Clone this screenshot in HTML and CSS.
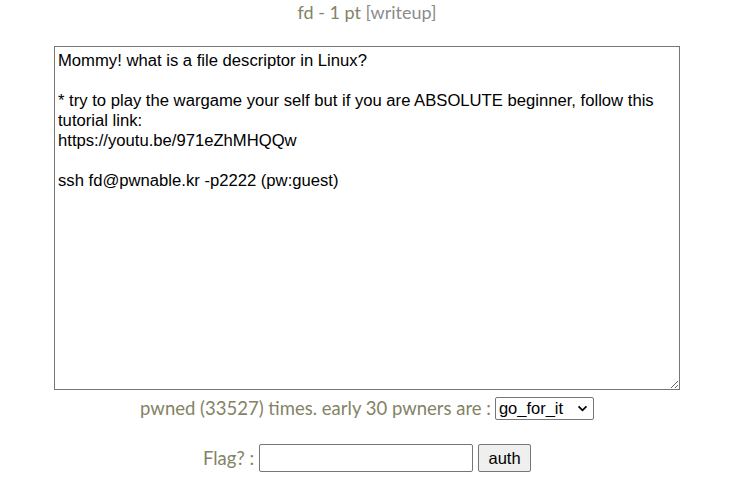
FILE: index.html
```html
<!DOCTYPE html>
<html>
<head>
<meta charset="utf-8">
<link rel="stylesheet" href="styles.css">
</head>
<body>
<div class="page">
  <div class="title"><span class="name">fd - 1 pt </span><span class="writeup">[writeup]</span></div>
  <textarea class="desc" readonly>Mommy! what is a file descriptor in Linux?

* try to play the wargame your self but if you are ABSOLUTE beginner, follow this tutorial link:
https://youtu.be/971eZhMHQQw

ssh fd@pwnable.kr -p2222 (pw:guest)
</textarea>
  <div class="row pwned">
    <span class="label">pwned (33527) times. early 30 pwners are :</span>
    <select class="sel"><option>go_for_it</option></select>
  </div>
  <div class="row flag">
    <span class="label">Flag? :</span>
    <input class="flaginput" type="text">
    <button class="auth">auth</button>
  </div>
</div>
</body>
</html>
```
FILE: styles.css
```css
html, body {
  margin: 0;
  padding: 0;
  background: #ffffff;
}
.page {
  display: flex;
  flex-direction: column;
  align-items: center;
  padding-top: 1px;
}
.title {
  font-family: Lato, "Open Sans", sans-serif;
  font-size: 18px;
  line-height: 22px;
  height: 22px;
}
.title .name { color: #838366; }
.title .writeup { color: #8c8c8c; }
.desc {
  margin-top: 23px;
  width: 626px;
  height: 344px;
  box-sizing: border-box;
  border: 1px solid #767676;
  border-radius: 0;
  padding: 4px 3px 2px 3px;
  font-family: Arial, "Liberation Sans", sans-serif;
  font-size: 16.65px;
  line-height: 20px;
  color: #000;
  resize: both;
  outline: none;
}
.row {
  display: flex;
  align-items: center;
  gap: 4px;
}
.label {
  font-family: Lato, "Open Sans", sans-serif;
  font-size: 18.5px;
  color: #838366;
}
.pwned {
  margin-top: 6px;
  height: 24px;
}
.sel {
  appearance: none;
  -webkit-appearance: none;
  height: 23px;
  width: 99px;
  box-sizing: border-box;
  font-family: Arial, "Liberation Sans", sans-serif;
  font-size: 16.5px;
  border: 1px solid #767676;
  border-radius: 2px;
  background-color: #fff;
  background-image: url("data:image/svg+xml;utf8,<svg xmlns='http://www.w3.org/2000/svg' width='12' height='8' viewBox='0 0 12 8'><path d='M1.5 1.5 L6 6 L10.5 1.5' fill='none' stroke='black' stroke-width='2'/></svg>");
  background-repeat: no-repeat;
  background-position: right 5px center;
  background-size: 11px 7px;
  color: #000;
  padding: 0 20px 0 3px;
}
.flag {
  margin-top: 24px;
  gap: 5px;
}
.flaginput {
  width: 214px;
  height: 28px;
  box-sizing: border-box;
  border: 1px solid #767676;
  border-radius: 2px;
  margin: 0;
}
.auth {
  height: 28px;
  width: 53px;
  box-sizing: border-box;
  font-family: Arial, "Liberation Sans", sans-serif;
  font-size: 16.5px;
  border: 1px solid #767676;
  border-radius: 2px;
  background: #efefef;
  color: #000;
  margin: 0;
  padding: 0;
}
```
